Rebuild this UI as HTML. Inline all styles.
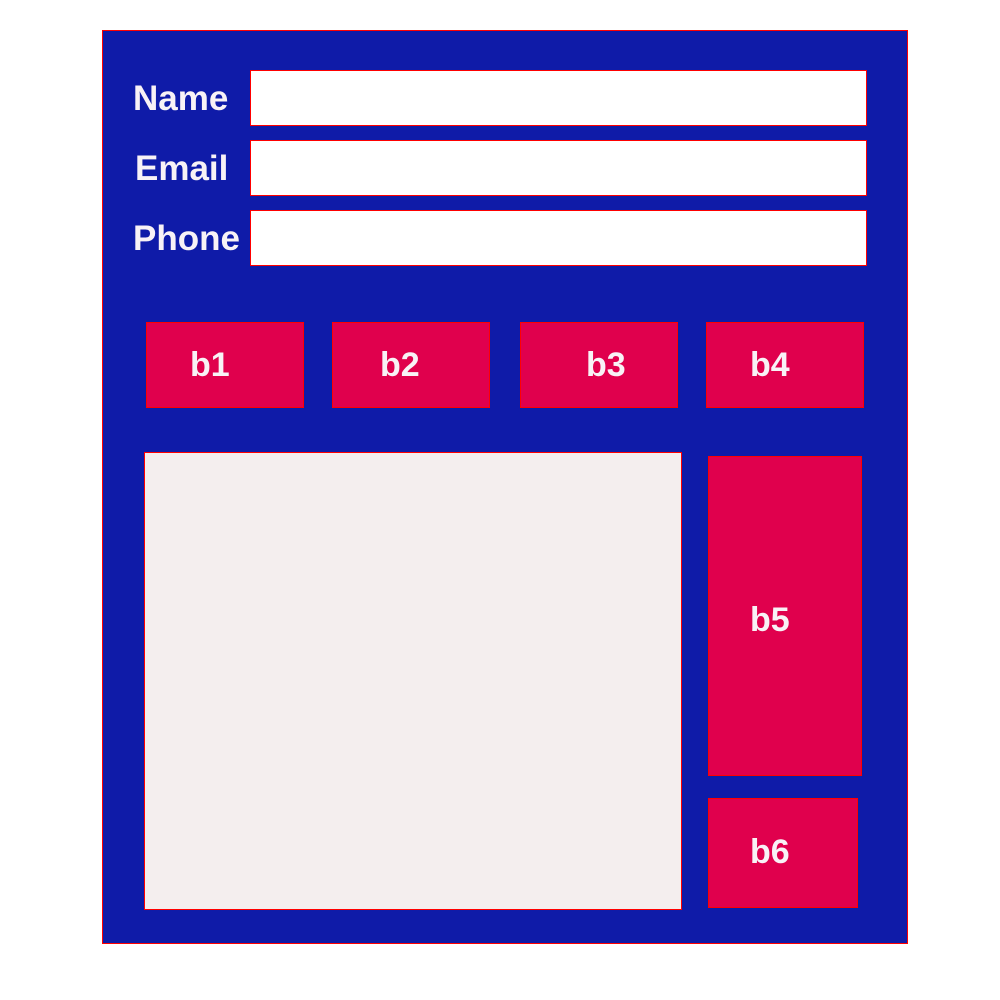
<!DOCTYPE html>
<html><head><meta charset="utf-8"><style>
body{margin:0;width:1000px;height:1000px;background:#fff;position:relative;font-family:"Liberation Sans",sans-serif;font-weight:bold;}
div{position:absolute;box-sizing:border-box;}
.panel{left:102px;top:30px;width:806px;height:914px;background:#0f1ba8;border:1px solid #f00;}
.in{background:#fff;border:1px solid #f00;left:250px;width:617px;height:56px;}
.lb{color:#f8f2f6;font-size:35px;line-height:1;}
.b{background:#e0004d;border:1px solid #f00;color:#f8f2f6;font-size:34px;line-height:1;}
.t{position:absolute;}
</style></head><body>
<div class="panel"></div>
<div class="lb" style="left:133px;top:81px">Name</div>
<div class="lb" style="left:135px;top:151px">Email</div>
<div class="lb" style="left:133px;top:221px">Phone</div>
<div class="in" style="top:70px"></div>
<div class="in" style="top:140px"></div>
<div class="in" style="top:210px"></div>
<div class="b" style="left:146px;top:322px;width:158px;height:86px"><span class="t" style="left:43px;top:25px">b1</span></div>
<div class="b" style="left:332px;top:322px;width:158px;height:86px"><span class="t" style="left:47px;top:25px">b2</span></div>
<div class="b" style="left:520px;top:322px;width:158px;height:86px"><span class="t" style="left:65px;top:25px">b3</span></div>
<div class="b" style="left:706px;top:322px;width:158px;height:86px"><span class="t" style="left:43px;top:25px">b4</span></div>
<div style="left:144px;top:452px;width:538px;height:458px;background:#f4eeee;border:1px solid #f00"></div>
<div class="b" style="left:708px;top:456px;width:154px;height:320px"><span class="t" style="left:41px;top:146px">b5</span></div>
<div class="b" style="left:708px;top:798px;width:150px;height:110px"><span class="t" style="left:41px;top:36px">b6</span></div>
</body></html>
